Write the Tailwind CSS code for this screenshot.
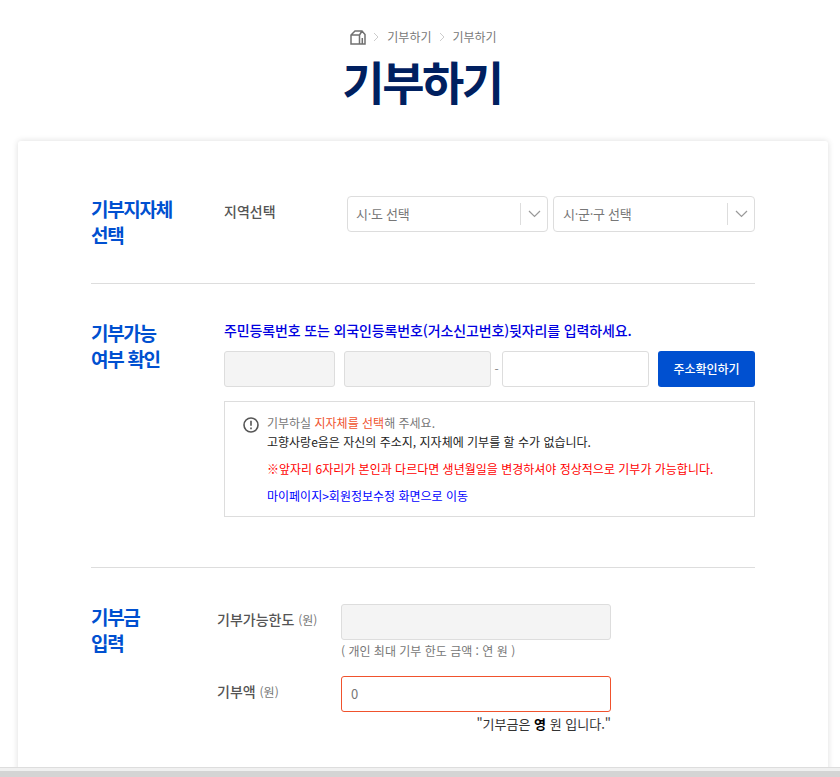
<!DOCTYPE html>
<html lang="ko">
<head>
    <meta charset="UTF-8">
    <title>기부하기</title>
    <script src="https://cdn.jsdelivr.net/npm/@tailwindcss/browser@4"></script>
</head>
<body class="bg-white font-['Noto_Sans_CJK_KR','Noto_Sans',sans-serif]">
<div class="h-[777px] overflow-hidden flex flex-col">
    <div class="flex-1 min-h-0 overflow-hidden">
        <!-- breadcrumb and title -->
        <div class="h-[141px] pt-[27px] flex flex-col items-center">
            <div class="h-5 pl-[7px] flex items-center text-[12px] text-[#777]">
                <svg class="w-[16px] h-[15px]" viewBox="0 0 16 15" fill="none" stroke="#707070" stroke-width="1.5"><path d="M1 14V5l4-4h7l3 3.500V14zM1 5h8.500v9M9.500 5L12 1M12.300 14V8"/></svg>
                <svg class="w-[6px] h-[10px] ml-[7px] mr-[8px]" viewBox="0 0 6 10" fill="none" stroke="#ccc" stroke-width="1"><path d="M1 1l4 4-4 4"/></svg>
                <span>기부하기</span>
                <svg class="w-[6px] h-[10px] ml-[7px] mr-[8px]" viewBox="0 0 6 10" fill="none" stroke="#ccc" stroke-width="1"><path d="M1 1l4 4-4 4"/></svg>
                <span>기부하기</span>
            </div>
            <h1 class="-mt-[1px] ml-[4px] text-[46px] leading-[68px] font-bold text-[#002060] tracking-[-2.500px]">기부하기</h1>
        </div>

        <!-- card -->
        <div class="mx-[18px] w-[810px] pb-[60px] bg-white rounded-t-[3px] shadow-[0_0_6px_rgba(0,0,0,0.14)] px-[73px]">
            <!-- region -->
            <section class="h-[143px] border-b border-[#ddd] flex pt-[55px]">
                <h2 class="w-[133px] text-[19px] leading-[26px] font-bold tracking-[-1.300px] text-[#0050d0]">기부지자체<br>선택</h2>
                <div class="w-[123px] text-sm leading-[30px] font-medium text-[#555]">지역선택</div>
                <div class="flex gap-[5px] tracking-[-0.300px]">
                    <div class="w-[201px] h-9 border border-[#ddd] rounded-[4px] flex items-center pl-[8px] text-[13px] text-[#777]">
                        <span class="flex-1">시·도 선택</span>
                        <span class="w-px h-[22px] bg-[#ddd]"></span>
                        <svg class="w-[26px] h-[8px]" viewBox="0 0 26 8" fill="none" stroke="#999" stroke-width="1.2"><path d="M8 1l5.500 5.500L19 1"/></svg>
                    </div>
                    <div class="w-[202px] h-9 border border-[#ddd] rounded-[4px] flex items-center pl-[9px] text-[13px] text-[#777]">
                        <span class="flex-1">시·군·구 선택</span>
                        <span class="w-px h-[22px] bg-[#ddd]"></span>
                        <svg class="w-[26px] h-[8px]" viewBox="0 0 26 8" fill="none" stroke="#999" stroke-width="1.2"><path d="M8 1l5.500 5.500L19 1"/></svg>
                    </div>
                </div>
            </section>

            <!-- eligibility -->
            <section class="h-[284px] border-b border-[#ddd] flex pt-[36px]">
                <h2 class="w-[133px] text-[19px] leading-[26px] font-bold tracking-[-1.300px] text-[#0050d0]">기부가능<br>여부 확인</h2>
                <div class="w-[531px]">
                    <p class="text-sm leading-[20px] font-medium tracking-[-0.130px] text-[#0000e0]">주민등록번호 또는 외국인등록번호(거소신고번호)뒷자리를 입력하세요.</p>
                    <div class="mt-[11px] flex items-center">
                        <div class="w-[111px] h-9 bg-[#f4f4f4] border border-[#ddd] rounded-[3px]"></div>
                        <div class="ml-[9px] w-[147px] h-9 bg-[#f4f4f4] border border-[#ddd] rounded-[3px]"></div>
                        <span class="w-[11px] text-center text-xs text-[#888]">-</span>
                        <div class="w-[147px] h-9 bg-white border border-[#ddd] rounded-[3px]"></div>
                        <button class="ml-[9px] w-[97px] h-9 bg-[#0050d0] rounded-[3px] text-white text-xs font-medium">주소확인하기</button>
                    </div>
                    <div class="mt-[14px] h-[116px] border border-[#ddd] pl-[18px] pt-[11px] flex">
                        <svg class="w-4 h-4 mt-[4px] shrink-0" viewBox="0 0 16 16" fill="none" stroke="#555" stroke-width="1.6"><circle cx="8" cy="8" r="7"/><path d="M8 3.800v5M8 10.500v1.700"/></svg>
                        <div class="ml-2 text-xs">
                            <p class="leading-[19px] text-[#777]">기부하실 <span class="text-[#f0522d]">지자체를 선택</span>해 주세요.</p>
                            <p class="leading-[19px] text-[#222]">고향사랑e음은 자신의 주소지, 지자체에 기부를 할 수가 없습니다.</p>
                            <p class="mt-[8px] leading-[19px] text-[#f00]">※앞자리 6자리가 본인과 다르다면 생년월일을 변경하셔야 정상적으로 기부가 가능합니다.</p>
                            <p class="mt-[8px] leading-[19px] text-[#00f]">마이페이지&gt;회원정보수정 화면으로 이동</p>
                        </div>
                    </div>
                </div>
            </section>

            <!-- amount -->
            <section class="flex pt-[36px]">
                <h2 class="w-[126px] text-[19px] leading-[26px] font-bold tracking-[-1.300px] text-[#0050d0]">기부금<br>입력</h2>
                <div class="flex-1">
                    <div class="flex">
                        <div class="w-[124px] text-sm leading-[30px] font-medium text-[#555]">기부가능한도 <span class="text-xs font-normal text-[#777]">(원)</span></div>
                        <div class="w-[270px]">
                            <div class="h-9 bg-[#f4f4f4] border border-[#ddd] rounded-[3px]"></div>
                            <p class="text-xs leading-[22px] text-[#777]">( 개인 최대 기부 한도 금액 : 연 원 )</p>
                        </div>
                    </div>
                    <div class="mt-[14px] flex">
                        <div class="w-[124px] text-sm leading-[30px] font-medium text-[#555]">기부액 <span class="text-xs font-normal text-[#777]">(원)</span></div>
                        <div class="w-[270px]">
                            <div class="h-9 border border-[#f0522d] rounded-[3px] flex items-center pl-[9px] text-[13px] text-[#777]">0</div>
                            <p class="mt-[1px] text-right text-[13px] leading-[22px] text-[#333]">"기부금은 <b class="text-black">영</b> 원 입니다."</p>
                        </div>
                    </div>
                </div>
            </section>
        </div>
    </div>
    <!-- browser scrollbar strip at the bottom -->
    <div class="h-[10px] shrink-0 border-t border-[#ddd] bg-[#d4d4d4]">
        <div class="h-[3px] bg-[#f0f0f0]"></div>
    </div>
</div>
</body>
</html>
